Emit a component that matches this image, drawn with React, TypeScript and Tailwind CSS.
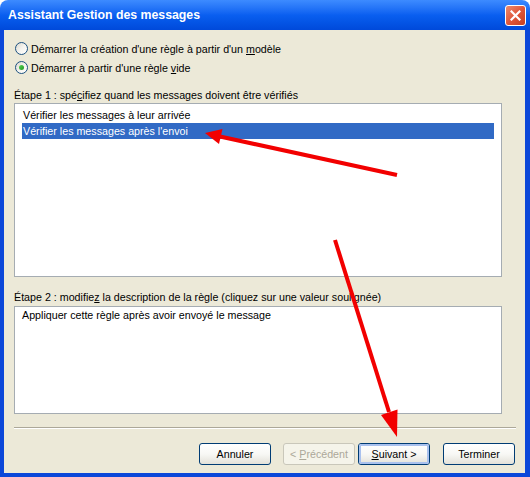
import React from "react";

function Radio({ checked }: { checked?: boolean }) {
  return (
    <span className="relative mr-[3px] ml-px flex h-[13px] w-[13px] shrink-0 items-center justify-center rounded-full border border-[#1c5180] bg-gradient-to-br from-[#dcd9cf] via-[#f4f3ee] to-white">
      {checked && (
        <span className="h-[5px] w-[5px] rounded-full bg-gradient-to-br from-[#55d055] to-[#1f9a1f]" />
      )}
    </span>
  );
}

function XpButton({
  children,
  disabled,
  isDefault,
}: {
  children: React.ReactNode;
  disabled?: boolean;
  isDefault?: boolean;
}) {
  if (disabled) {
    return (
      <div className="flex h-[22px] w-[72px] items-center justify-center rounded-[3px] border border-[#c9c7ba] bg-[#f5f4ea] text-[#aca899]">
        <span>{children}</span>
      </div>
    );
  }
  return (
    <div className="flex h-[22px] w-[72px] items-center justify-center rounded-[3px] border border-[#003c74] bg-gradient-to-b from-white via-[#f8f8f5] to-[#e3e1d9]">
      <div
        className={
          isDefault
            ? "flex h-full w-full items-center justify-center rounded-[2px] border-2 border-[#a9c1ee]"
            : "flex h-full w-full items-center justify-center"
        }
      >
        <span>{children}</span>
      </div>
    </div>
  );
}

export default function App() {
  return (
    <div
      className="relative flex h-[477px] w-[530px] flex-col bg-white text-[10.7px] leading-[14px] text-black"
      style={{ fontFamily: '"Liberation Sans", Arial, sans-serif' }}
    >
      {/* title bar */}
      <div className="flex h-[30px] shrink-0 items-center justify-between rounded-t-[8px] bg-gradient-to-b from-[#3d8bff] via-[#0a5ff0] to-[#0049da] pl-[8px] pr-[4px]">
        <span className="text-[12.3px] font-bold text-white">Assistant Gestion des messages</span>
        <div className="flex h-[21px] w-[21px] items-center justify-center rounded-[3px] border border-white bg-gradient-to-br from-[#e98a6f] via-[#e0573a] to-[#c5401f]">
          <svg width="11" height="11" viewBox="0 0 11 11">
            <path d="M1.5 1.5 L9.5 9.5 M9.5 1.5 L1.5 9.5" stroke="white" strokeWidth="2.2" strokeLinecap="square" />
          </svg>
        </div>
      </div>

      {/* frame + client */}
      <div className="flex flex-1 flex-col border-b-[4px] border-l-[4px] border-r-[5px] border-[#0b47d9] bg-[#ece9d8] pl-[10px] pr-[10px] pt-[9px]">
        <div className="flex h-[19px] items-center">
          <Radio />
          <span>
            Démarrer la création d'une règle à partir d'un <u>m</u>odèle
          </span>
        </div>
        <div className="flex h-[19px] items-center">
          <Radio checked />
          <span>
            Démarrer à partir d'une règle <u>v</u>ide
          </span>
        </div>

        <div className="mt-[11px] mb-px h-[14px]">
          Étape 1 : spé<u>c</u>ifiez quand les messages doivent être vérifiés
        </div>
        <div className="h-[174px] w-[488px] border border-[#a5acb2] bg-white px-[7px] pt-[3px]">
          <div className="h-[16px] pl-px leading-[16px]">Vérifier les messages à leur arrivée</div>
          <div className="h-[16px] bg-[#316ac5] pl-px leading-[16px] text-white">
            Vérifier les messages après l'envoi
          </div>
        </div>

        <div className="mt-[13px] mb-[2px] h-[14px]">
          Étape 2 : modifie<u>z</u> la description de la règle (cliquez sur une valeur soulignée)
        </div>
        <div className="h-[108px] w-[488px] border border-[#a5acb2] bg-white px-[7px] pt-px">
          Appliquer cette règle après avoir envoyé le message
        </div>

        <div className="mt-[13px] h-[2px] w-[502px] border-t border-b border-t-[#aca899] border-b-white" />

        <div className="mt-[14px] flex justify-end">
          <XpButton>Annuler</XpButton>
          <div className="ml-[12px]">
            <XpButton disabled>
              {"< "}
              <u>P</u>récédent
            </XpButton>
          </div>
          <div className="ml-[3px]">
            <XpButton isDefault>
              <u>S</u>uivant {">"}
            </XpButton>
          </div>
          <div className="ml-[13px]">
            <XpButton>Terminer</XpButton>
          </div>
        </div>
      </div>

      {/* red annotation arrows */}
      <svg className="pointer-events-none absolute left-0 top-0" width="530" height="477" viewBox="0 0 530 477">
        <line x1="397" y1="175" x2="220" y2="136.5" stroke="#f20000" strokeWidth="4" />
        <polygon points="205,133 222.5,129 219,144" fill="#f20000" />
        <line x1="335" y1="240" x2="389" y2="412" stroke="#f20000" strokeWidth="4" />
        <polygon points="397,437 381,415 397.5,409.5" fill="#f20000" />
      </svg>
    </div>
  );
}
